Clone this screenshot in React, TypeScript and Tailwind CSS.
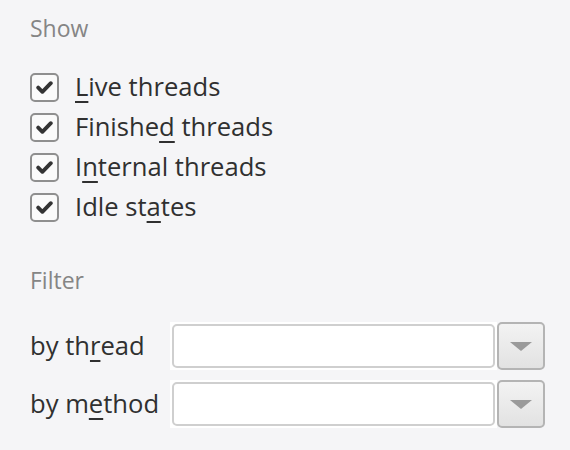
import React from "react";

function Check() {
  return (
    <span className="flex h-[29px] w-[29px] shrink-0 items-center justify-center rounded-[5px] border-2 border-[#8f8f8f] bg-[#fafafa]">
      <svg width="17" height="13" viewBox="0 0 17 13" fill="none">
        <path d="M2.2 6.6 L6.4 10.8 L14.8 2.2" stroke="#333333" strokeWidth="3.8" strokeLinecap="round" strokeLinejoin="round" />
      </svg>
    </span>
  );
}

function U({ children }: { children: React.ReactNode }) {
  return <span className="underline decoration-[2px] underline-offset-[5px]">{children}</span>;
}

function Row({ children }: { children: React.ReactNode }) {
  return (
    <label className="flex h-[40px] items-center gap-[16px]">
      <Check />
      <span>{children}</span>
    </label>
  );
}

function FilterRow({ label }: { label: React.ReactNode }) {
  return (
    <div className="flex h-[48px] items-center">
      <div className="w-[140px]">{label}</div>
      <div className="h-[48px] w-[327px] bg-white p-[2px]">
        <div className="h-full w-full rounded-[5px] border-2 border-[#cfcfcf] bg-white" />
      </div>
      <div className="flex h-[48px] w-[48px] items-center justify-center rounded-[5px] border-2 border-[#b4b4b4] bg-gradient-to-b from-[#f3f3f3] to-[#e2e2e2]">
        <svg width="22" height="9" viewBox="0 0 22 9">
          <path d="M0 0 H22 L11 9 Z" fill="#9a9a9a" />
        </svg>
      </div>
    </div>
  );
}

export default function App() {
  return (
    <div
      className="h-[450px] w-[570px] bg-[#f5f5f7] pl-[30px] pt-[14px] text-[25.6px] text-[#303030]"
      style={{ fontFamily: '"Open Sans", "Noto Sans", sans-serif' }}
    >
      <div className="h-[28px] text-[23px] leading-[28px] text-[#858585]">Show</div>
      <div className="mt-[25px] flex flex-col">
        <Row><U>L</U>ive threads</Row>
        <Row>Finishe<U>d</U> threads</Row>
        <Row>I<U>n</U>ternal threads</Row>
        <Row>Idle st<U>a</U>tes</Row>
      </div>
      <div className="mt-[39px] h-[28px] text-[23px] leading-[28px] text-[#858585]">Filter</div>
      <div className="mt-[28px] flex flex-col gap-[10px]">
        <FilterRow label={<span>by th<U>r</U>ead</span>} />
        <FilterRow label={<span>by m<U>e</U>thod</span>} />
      </div>
    </div>
  );
}
